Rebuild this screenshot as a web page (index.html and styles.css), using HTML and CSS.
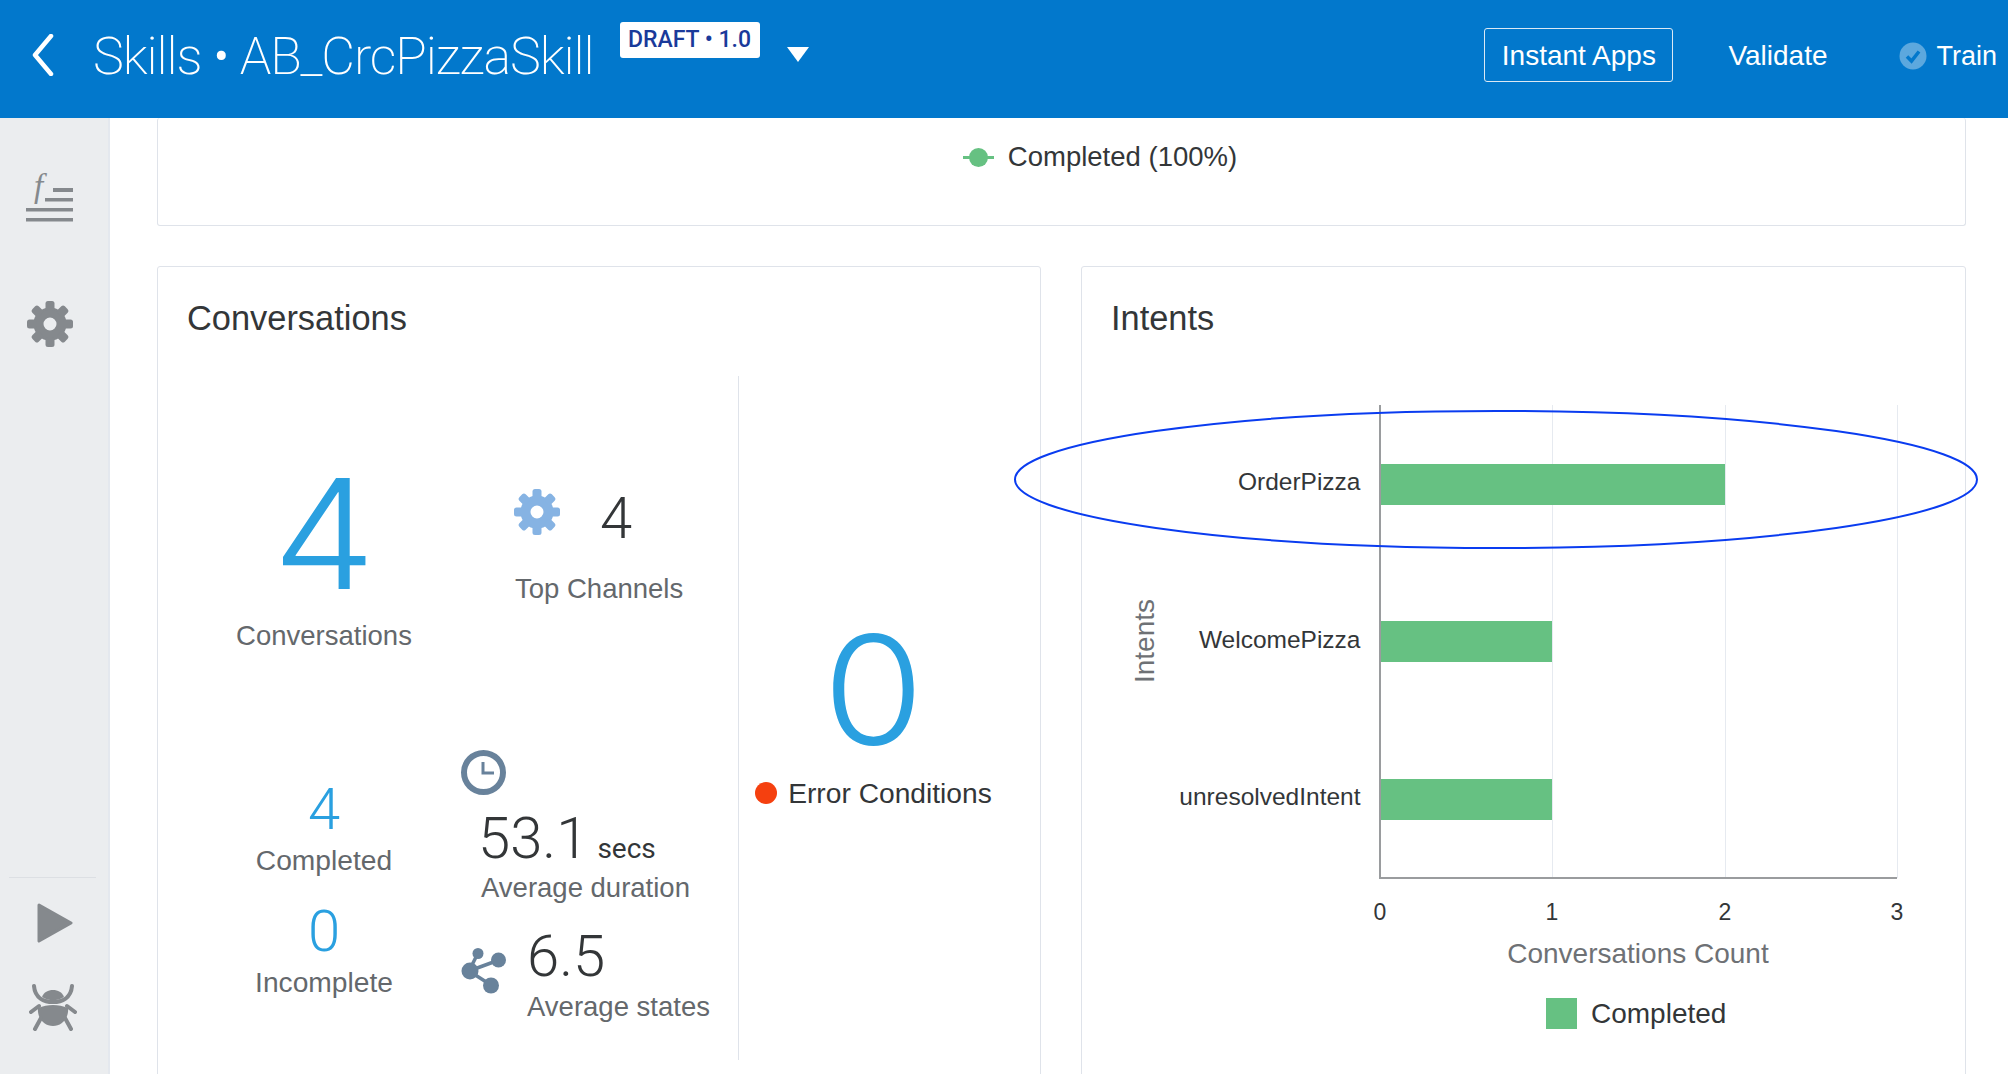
FILE: index.html
```html
<!DOCTYPE html>
<html lang="en">
<head>
  <meta charset="UTF-8" />
  <meta name="viewport" content="width=device-width, initial-scale=1.0"/>
  <title>Skills - AB_CrcPizzaSkill</title>
  <link rel="stylesheet" href="styles.css">
</head>
<body>

  <!-- shared icons -->
  <svg class="defs" width="0" height="0">
    <symbol id="gear" viewBox="0 0 46 46">
      <circle cx="23" cy="23" r="11.5" fill="none" stroke="currentColor" stroke-width="10"/>
      <g fill="currentColor">
        <rect x="18.5" y="0" width="9" height="10" rx="2.5"/>
        <rect x="18.5" y="36" width="9" height="10" rx="2.5"/>
        <rect x="0" y="18.5" width="10" height="9" rx="2.5"/>
        <rect x="36" y="18.5" width="10" height="9" rx="2.5"/>
        <rect x="18.5" y="0" width="9" height="10" rx="2.5" transform="rotate(45 23 23)"/>
        <rect x="18.5" y="0" width="9" height="10" rx="2.5" transform="rotate(135 23 23)"/>
        <rect x="18.5" y="0" width="9" height="10" rx="2.5" transform="rotate(225 23 23)"/>
        <rect x="18.5" y="0" width="9" height="10" rx="2.5" transform="rotate(315 23 23)"/>
      </g>
    </symbol>
  </svg>

  <header class="topbar">
    <div class="topbar-left">
      <svg class="back" width="22" height="42" viewBox="0 0 22 42">
        <path d="M19 2 L3 21 L19 40" fill="none" stroke="#fff" stroke-width="4.5" stroke-linecap="round" stroke-linejoin="round"/>
      </svg>
      <h1>Skills • AB_CrcPizzaSkill</h1>
      <span class="badge">DRAFT • 1.0</span>
      <span class="caret"></span>
    </div>
    <div class="topbar-right">
      <button class="btn-outline">Instant Apps</button>
      <span class="top-link">Validate</span>
      <span class="top-link train">
        <svg width="28" height="28" viewBox="0 0 28 28">
          <circle cx="14" cy="14" r="13.5" fill="#5ca8de"/>
          <path d="M8 14.5 L12.5 19 L20 9.5" fill="none" stroke="#0278cc" stroke-width="3.5"/>
        </svg>
        Train
      </span>
    </div>
  </header>

  <div class="layout">
    <aside class="sidebar">
      <div class="side-top">
        <svg class="side-fx" width="47" height="47" viewBox="0 0 47 47">
          <text x="8" y="22" class="fx">f</text>
          <rect x="27" y="13" width="20" height="4"/>
          <rect x="19" y="23" width="28" height="3.5"/>
          <rect x="0" y="33" width="47" height="3.5"/>
          <rect x="0" y="43" width="47" height="3.5"/>
        </svg>
        <svg class="side-gear" width="46" height="46"><use href="#gear"/></svg>
      </div>
      <div class="side-bottom">
        <svg class="side-play" width="36" height="40" viewBox="0 0 36 40">
          <path d="M2 2 L34 20 L2 38 Z" stroke-width="3" stroke="#85898d" stroke-linejoin="round"/>
        </svg>
        <svg class="side-bug" width="48" height="47" viewBox="0 0 48 47">
          <path d="M5 2 C6 14 15 18 24 18 C33 18 42 14 43 2" fill="none" stroke="#85898d" stroke-width="4" stroke-linecap="round"/>
          <path d="M13 13 C15 8 19 6 24 6 C29 6 33 8 35 13 C31 15.500 28 16 24 16 C20 16 17 15.500 13 13 Z"/>
          <path d="M9 24 C14 22 19 21 24 21 C29 21 34 22 39 24 C40 34 33 42 24 42 C15 42 8 34 9 24 Z"/>
          <path d="M2 28 L10 22 M46 28 L38 22 M6 45 L12 34 M42 45 L36 34" fill="none" stroke="#85898d" stroke-width="4" stroke-linecap="round"/>
        </svg>
      </div>
    </aside>

    <main class="content">
      <section class="card card-legend">
        <div class="legend-line">
          <span class="marker"></span>
          <span>Completed (100%)</span>
        </div>
      </section>

      <div class="cards">
        <section class="card">
          <h2>Conversations</h2>
          <div class="conv-body">
            <div class="conv-stats">
              <div class="stat-big">
                <div class="num-xl">4</div>
                <div class="label big-label">Conversations</div>
              </div>
              <div class="stat-channels">
                <div class="channels-row">
                  <svg class="channels-gear" width="46" height="46"><use href="#gear"/></svg>
                  <div class="num-md dark channels-num">4</div>
                </div>
                <div class="label channels-label">Top Channels</div>
              </div>
              <div class="stat-counts">
                <div class="num-md">4</div>
                <div class="label count-label">Completed</div>
                <div class="num-md second">0</div>
                <div class="label count-label">Incomplete</div>
              </div>
              <div class="stat-times">
                <svg class="clock" width="46" height="47" viewBox="0 0 46 47">
                  <circle cx="22.500" cy="23.500" r="19.500" fill="none" stroke="#68829b" stroke-width="6"/>
                  <path d="M22 13 V24 H33" fill="none" stroke="#68829b" stroke-width="3"/>
                </svg>
                <div class="duration">
                  <div class="num-md dark duration-num">53.1<span class="unit">secs</span></div>
                  <div class="label duration-label">Average duration</div>
                </div>
                <div class="states">
                  <svg class="states-icon" width="46" height="46" viewBox="0 0 46 46">
                    <path d="M8 23 L17 5 M8 23 L38 12 M8 23 L30 37" stroke="#68829b" stroke-width="3.500"/>
                    <g fill="#68829b">
                      <circle cx="9" cy="23" r="8.500"/>
                      <circle cx="17" cy="5.500" r="5.500"/>
                      <circle cx="37.500" cy="12" r="7.500"/>
                      <circle cx="30" cy="37.500" r="8"/>
                    </g>
                  </svg>
                  <div>
                    <div class="num-md dark">6.5</div>
                    <div class="label states-label">Average states</div>
                  </div>
                </div>
              </div>
            </div>
            <div class="conv-errors">
              <div class="num-xl">0</div>
              <div class="error-line">
                <span class="dot"></span>
                <span>Error Conditions</span>
              </div>
            </div>
          </div>
        </section>

        <section class="card card-intents">
          <h2>Intents</h2>
          <svg class="chart" width="882" height="684" viewBox="0 0 882 684">
            <g class="grid">
              <line x1="470.500" y1="15" x2="470.500" y2="488"/>
              <line x1="643.500" y1="15" x2="643.500" y2="488"/>
              <line x1="815.500" y1="15" x2="815.500" y2="488"/>
            </g>
            <g class="bars">
              <rect x="298" y="74" width="345" height="41"/>
              <rect x="298" y="231" width="172" height="41"/>
              <rect x="298" y="389" width="172" height="41"/>
            </g>
            <path class="axis" d="M298 15 V488 H815"/>
            <g class="cat">
              <text x="278.500" y="100">OrderPizza</text>
              <text x="278.500" y="258">WelcomePizza</text>
              <text x="278.500" y="415">unresolvedIntent</text>
            </g>
            <g class="tick">
              <text x="298" y="530">0</text>
              <text x="470" y="530">1</text>
              <text x="643" y="530">2</text>
              <text x="815" y="530">3</text>
            </g>
            <text class="axis-title" x="556" y="573">Conversations Count</text>
            <text class="axis-title" transform="translate(72 251) rotate(-90)">Intents</text>
            <rect class="swatch" x="464" y="608" width="31" height="31"/>
            <text class="legend-text" x="509" y="633">Completed</text>
          </svg>
          <svg class="callout" width="965" height="140" viewBox="0 0 965 140">
            <ellipse cx="482" cy="69.500" rx="481" ry="68.500" fill="none" stroke="#0a3cf0" stroke-width="2"/>
          </svg>
        </section>
      </div>
    </main>
  </div>

</body>
</html>
```

FILE: styles.css
```css
:root {
  --bar: #0278cc;
  --side: #ebedef;
  --line: #dfe3ea;
  --blue: #2aa0e0;
  --text: #333638;
  --muted: #64686c;
  --green: #66c182;
  --icon: #85898d;
}
* { box-sizing: border-box; margin:0; padding:0; }
html, body { height: 100%; overflow: hidden; }
body {
  font-family: "Liberation Sans", Arial, sans-serif;
  background: #fff;
  color: var(--text);
  display: flex;
  flex-direction: column;
}
.defs { position: absolute; }

/* top bar */
.topbar {
  height: 118px;
  flex: none;
  background: var(--bar);
  color: #fff;
  display: flex;
  justify-content: space-between;
  padding: 0 11px 0 32px;
}
.topbar-left { display: flex; align-items: flex-start; }
.back { margin: 34px 0 0 0; }
.topbar h1 {
  font-family: Roboto, sans-serif;
  font-weight: 200;
  font-size: 52px;
  line-height: 60px;
  letter-spacing: -1.100px;
  margin: 27px 0 0 39px;
  white-space: nowrap;
}
.badge {
  background: #fff;
  color: #1a3a9a;
  font-family: Roboto, sans-serif;
  font-weight: 500;
  font-size: 23px;
  line-height: 36px;
  height: 36px;
  width: 140px;
  text-align: center;
  border-radius: 3px;
  margin: 22px 0 0 26px;
  white-space: nowrap;
}
.caret {
  width: 0;
  height: 0;
  border-left: 11.5px solid transparent;
  border-right: 11.5px solid transparent;
  border-top: 15px solid #fff;
  margin: 47px 0 0 27px;
}
.topbar-right { display: flex; align-items: flex-start; }
.btn-outline {
  background: transparent;
  color: #fff;
  font: inherit;
  font-size: 28px;
  width: 189px;
  height: 54px;
  margin-top: 28px;
  padding-top: 2px;
  border: 1px solid #dbe9f5;
  border-radius: 3px;
}
.top-link {
  font-size: 28px;
  line-height: 58px;
  margin-top: 27px;
  margin-left: 55px;
}
.train {
  display: flex;
  align-items: center;
  gap: 9px;
  font-size: 27px;
  margin-left: 72px;
}

/* page */
.layout { flex: 1; display: flex; min-height: 0; }
.sidebar {
  width: 110px;
  flex: none;
  background: var(--side);
  border-right: 2px solid #e4e8ee;
  display: flex;
  flex-direction: column;
  justify-content: space-between;
  align-items: center;
  fill: var(--icon);
  color: var(--icon);
}
.side-top {
  display: flex;
  flex-direction: column;
  align-items: center;
  padding-top: 57px;
  margin-right: 10px;
}
.side-fx { overflow: visible; }
.fx {
  font-family: "Liberation Serif", serif;
  font-style: italic;
  font-size: 33px;
  fill: var(--icon);
}
.side-gear { margin: 79px 0 0 2px; }
.side-bottom {
  width: 87px;
  margin-right: 3px;
  height: 197px;
  border-top: 1px solid #dcdfe3;
  display: flex;
  flex-direction: column;
  align-items: center;
  padding-top: 25px;
}
.side-play { margin-left: 4px; }
.side-bug { margin-top: 41px; margin-left: 1px; }

.content {
  flex: 1;
  min-width: 0;
  padding: 0 42px 0 47px;
  overflow: hidden;
  display: flex;
  flex-direction: column;
}
.card {
  background: #fff;
  border: 1px solid var(--line);
  border-radius: 3px;
}
.card-legend {
  flex: none;
  height: 108px;
  border-top: none;
  padding: 23px 0 0 77px;
  display: flex;
  justify-content: center;
}
.legend-line {
  display: flex;
  align-items: center;
  gap: 14px;
  height: 32px;
  font-size: 27.500px;
}
.marker {
  position: relative;
  width: 31px;
  height: 3px;
  background: var(--green);
}
.marker::after {
  content: "";
  position: absolute;
  left: 6px;
  top: -8px;
  width: 19px;
  height: 19px;
  border-radius: 50%;
  background: var(--green);
}
.cards {
  display: grid;
  grid-template-columns: 884px 885px;
  gap: 40px;
  margin-top: 40px;
  flex: none;
  height: 900px;
}
.card h2 {
  font-weight: normal;
  font-size: 34.400px;
  line-height: 32px;
  padding: 35px 0 0 29px;
}

/* conversations */
.conv-body {
  display: flex;
  height: 684px;
  margin-top: 42px;
  padding-left: 29px;
}
.conv-stats {
  width: 552px;
  flex: none;
  border-right: 1px solid var(--line);
  display: grid;
  grid-template-columns: 274px 1fr;
  grid-template-rows: 373px 1fr;
}
.num-xl {
  font-family: Inter, sans-serif;
  font-weight: 300;
  font-size: 152px;
  line-height: 120px;
  color: var(--blue);
  text-align: center;
  transform: scaleX(1.08);
}
.num-md {
  font-family: Roboto, sans-serif;
  font-weight: 300;
  font-size: 58px;
  line-height: 60px;
  color: var(--blue);
  white-space: nowrap;
}
.num-md.dark { color: var(--text); }
.label {
  font-size: 27.500px;
  line-height: 32px;
  color: var(--muted);
  white-space: nowrap;
}
.stat-big { padding-top: 98px; text-align: center; }
.big-label { margin-top: 26px; }
.stat-channels { padding: 113px 0 0 54px; }
.channels-row { display: flex; align-items: flex-start; gap: 40px; height: 58px; margin-left: -1px; }
.channels-gear { color: #86b3e3; }
.channels-num { margin-top: -1px; }
.channels-label { margin-top: 26px; }
.stat-counts { padding-top: 30px; text-align: center; }
.count-label { margin-top: 5px; font-size: 28.200px; }
.num-md.second { margin-top: 25px; }
.clock { display: block; }
.duration { padding: 12px 0 0 20px; }
.duration-num { margin-left: -3px; }
.duration-label { margin-top: 4px; }
.unit {
  font-family: Roboto, sans-serif;
  font-weight: 400;
  font-size: 28px;
  line-height: 1;
  margin-left: 9px;
}
.states { display: flex; gap: 20px; margin-top: 22px; }
.states-icon { margin-top: 22px; flex: none; }
.states-label { margin-top: 5px; }
.conv-errors { flex: 1; padding: 254px 32px 0 0; }
.error-line {
  display: flex;
  align-items: center;
  justify-content: center;
  gap: 11px;
  margin-top: 27px;
  font-size: 28.200px;
  line-height: 32px;
}
.dot { width: 22px; height: 22px; border-radius: 50%; background: #f5400f; }

/* intents chart */
.card-intents { position: relative; }
.chart { display: block; margin-top: 56px; font-family: "Liberation Sans", sans-serif; }
.grid line { stroke: #e6eaf0; stroke-width: 1; }
.bars rect { fill: var(--green); }
.axis { fill: none; stroke: #9a9c9e; stroke-width: 2; }
.cat text { font-size: 24.500px; text-anchor: end; fill: var(--text); }
.tick text { font-size: 23px; text-anchor: middle; fill: var(--text); }
.axis-title { font-size: 28px; text-anchor: middle; fill: #6e7175; }
.swatch { fill: var(--green); }
.legend-text { font-size: 28px; fill: var(--text); }
.callout { position: absolute; left: -68px; top: 143px; }
```
